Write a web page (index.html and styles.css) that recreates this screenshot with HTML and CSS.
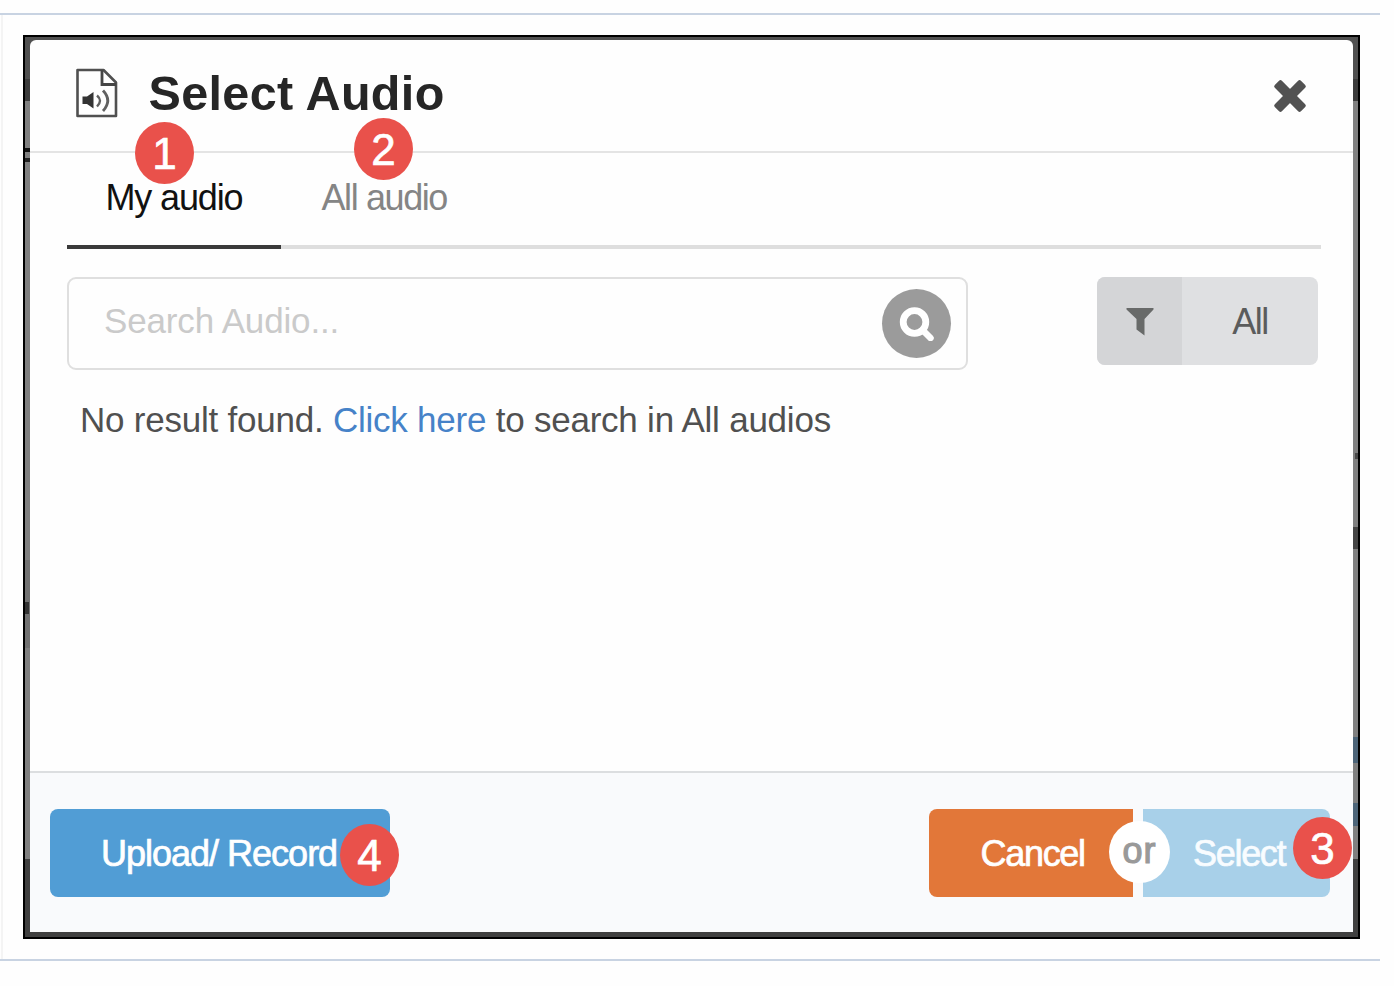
FILE: index.html
```html
<!DOCTYPE html>
<html lang="en">
<head>
<meta charset="utf-8">
<title>Select Audio</title>
<link rel="stylesheet" href="styles.css">
</head>
<body>
<div class="cell">
  <div class="frame">
    <div class="modal">
      <header class="modal-head">
        <svg class="file-icon" width="44" height="51" viewBox="0 0 44 51" fill="none">
          <path d="M2.500 2H28.500L41 14.500V48H2.500Z" stroke="#505050" stroke-width="2.600" stroke-linejoin="round"/>
          <path d="M27 2V16.500H41" stroke="#454545" stroke-width="2.800"/>
          <path d="M7.500 28.500H12L18.500 24V40.500L12 36H7.500Z" fill="#333"/>
          <path d="M22 27.500Q28 32.500 22 38.500" stroke="#606060" stroke-width="2.400"/>
          <path d="M28 22.500Q37.500 32.500 28 43" stroke="#606060" stroke-width="2.800"/>
        </svg>
        <h1 class="title">Select Audio</h1>
        <svg class="close-icon" width="34" height="34" viewBox="0 0 34 34" fill="#525252">
          <rect x="-1.500" y="12" width="37" height="10" rx="2" transform="rotate(45 17 17)"/>
          <rect x="-1.500" y="12" width="37" height="10" rx="2" transform="rotate(-45 17 17)"/>
        </svg>
      </header>
      <main class="modal-body">
        <nav class="tabs">
          <a class="tab tab-active">My audio<span class="badge badge-one">1</span></a>
          <a class="tab tab-all">All audio<span class="badge badge-two">2</span></a>
        </nav>
        <div class="search-row">
          <div class="search-box">
            <span class="placeholder">Search Audio...</span>
            <span class="search-button">
              <svg width="36" height="34" viewBox="0 0 36 34" fill="none">
                <circle cx="15.500" cy="15" r="11.300" stroke="#fff" stroke-width="6.800"/>
                <path d="M23.500 23L31.500 31" stroke="#fff" stroke-width="6.500" stroke-linecap="round"/>
              </svg>
            </span>
          </div>
          <div class="filter">
            <span class="filter-icon">
              <svg width="28" height="29" viewBox="0 0 28 29"><path d="M.5 1H27.500V2.500L18.500 12V28.500L10.500 22.500V12L.5 2.500Z" fill="#686a69"/></svg>
            </span>
            <span class="filter-label">All</span>
          </div>
        </div>
        <p class="result">No result found. <a class="link">Click here</a> to search in All audios</p>
      </main>
      <footer class="modal-foot">
        <div class="button upload">Upload/ Record<span class="badge badge-four">4</span></div>
        <div class="choices">
          <div class="button cancel">Cancel</div>
          <div class="button select">Select<span class="badge badge-three">3</span></div>
          <span class="or">or</span>
        </div>
      </footer>
    </div>
  </div>
</div>
</body>
</html>
```
FILE: styles.css
```css
* { box-sizing: border-box; }
body {
  margin: 0;
  padding-top: 13px;
  background: #fefefe;
  font-family: "Liberation Sans", Arial, sans-serif;
}
.cell {
  width: 1380px;
  height: 948px;
  border-top: 2px solid #c8d3e2;
  border-bottom: 2px solid #c8d3e2;
  padding: 20px 20px 20px 23px;
  background: linear-gradient(#f4f4f4, #f4f4f4) 1px 0 / 2px 100% no-repeat;
}
.frame {
  width: 1337px;
  height: 904px;
  border: 2px solid #000;
  padding: 3px 5px 5.5px 5px;
  background:
    linear-gradient(#111, #111) 0 111px / 5px 4px no-repeat,
    linear-gradient(#222, #222) 0 121px / 5px 4px no-repeat,
    linear-gradient(#333, #333) 0 565px / 4px 12px no-repeat,
    linear-gradient(#727272, #727272) 0 523px / 6px 88px no-repeat,
    linear-gradient(#454545, #454545) 100% 490px / 5px 22px no-repeat,
    linear-gradient(#4a4a4a, #4a4a4a) 100% 416px / 3px 6px no-repeat,
    linear-gradient(#4d6579, #4d6579) 100% 700px / 6px 26px no-repeat,
    linear-gradient(#4d6579, #4d6579) 100% 766px / 6px 23px no-repeat,
    linear-gradient(#505050 0 42px, #3c3c3c 42px 64px, #808080 64px 822px, #404040 822px);
}
.modal {
  height: 891.500px;
  display: flex;
  flex-direction: column;
  background: #fefefe;
  border-radius: 6px 6px 0 0;
}
.modal-head {
  height: 113px;
  flex: none;
  display: flex;
  align-items: flex-start;
  border-bottom: 2px solid #e4e4e4;
  padding: 28px 46px 0 44.500px;
}
.title {
  margin: -4px 0 0 30px;
  font-size: 48.500px;
  line-height: 58px;
  letter-spacing: .35px;
  color: #262626;
  white-space: nowrap;
}
.close-icon { margin: 10.500px 0 0 auto; }
.modal-body { flex: 1; padding: 0 32px 0 37px; }
.tabs {
  height: 96px;
  display: flex;
  border-bottom: 4px solid #dedede;
}
.tab {
  position: relative;
  height: 96px;
  padding-top: 25px;
  font-size: 36px;
  line-height: 40px;
  letter-spacing: -1.15px;
  white-space: nowrap;
}
.tab-active {
  width: 214px;
  padding-left: 38.500px;
  border-bottom: 4px solid #3a3a3a;
  color: #111;
}
.tab-all {
  padding-left: 40.500px;
  letter-spacing: -1.4px;
  color: #858585;
}
.badge {
  position: absolute;
  width: 59px;
  height: 62px;
  border-radius: 50%;
  background: #e9514b;
  color: #fff;
  font-size: 44px;
  line-height: 63px;
  letter-spacing: 0;
  text-align: center;
  -webkit-text-stroke: .7px #fff;
}
.badge-one { left: 68px; top: -31px; }
.badge-two { left: 73px; top: -35px; }
.badge-three { left: 150px; top: 8px; }
.badge-four { left: 290px; top: 15px; }
.search-row {
  display: flex;
  justify-content: space-between;
  margin-top: 28px;
  padding-right: 3px;
}
.search-box {
  width: 901px;
  height: 93px;
  display: flex;
  align-items: center;
  justify-content: space-between;
  border: 2px solid #dfdfdf;
  border-radius: 9px;
  padding: 0 15px 0 35px;
}
.placeholder {
  font-size: 35px;
  line-height: 40px;
  letter-spacing: -.15px;
  padding-bottom: 5px;
  color: #cacaca;
}
.search-button {
  width: 69px;
  height: 69px;
  display: flex;
  align-items: center;
  justify-content: center;
  border-radius: 50%;
  background: #9b9b9b;
}
.filter {
  width: 221px;
  height: 88px;
  display: flex;
  border-radius: 8px;
  overflow: hidden;
  background: #dfe0e2;
}
.filter-icon {
  width: 85px;
  display: flex;
  align-items: center;
  justify-content: center;
  background: #d4d5d7;
}
.filter-label {
  flex: 1;
  text-align: center;
  font-size: 36px;
  line-height: 89px;
  letter-spacing: -1.500px;
  color: #5b5c5c;
}
.result {
  margin: 30px 0 0 13px;
  font-size: 35px;
  line-height: 40px;
  letter-spacing: -.23px;
  color: #505050;
  white-space: nowrap;
}
.link { color: #4682c8; }
.modal-foot {
  height: 160.500px;
  flex: none;
  display: flex;
  justify-content: space-between;
  align-items: flex-start;
  border-top: 2px solid #dcdee0;
  background: #f9fafc;
  padding: 36px 23px 0 20px;
}
.button {
  position: relative;
  height: 88px;
  font-size: 36px;
  line-height: 89px;
  letter-spacing: -1.300px;
  color: #fff;
  white-space: nowrap;
  -webkit-text-stroke: .7px currentColor;
}
.upload {
  width: 340px;
  padding-left: 51px;
  border-radius: 8px;
  letter-spacing: -1px;
  background: #519dd5;
}
.choices { position: relative; display: flex; gap: 10px; }
.cancel {
  width: 204px;
  padding-left: 51.500px;
  border-radius: 8px 0 0 8px;
  background: #e27739;
}
.select {
  width: 187px;
  padding-left: 50px;
  border-radius: 0 8px 8px 0;
  background: #a8d0e9;
  color: #f8fcff;
}
.or {
  position: absolute;
  left: 180px;
  top: 12px;
  width: 61px;
  height: 62px;
  border-radius: 50%;
  background: #fff;
  color: #999;
  font-size: 36px;
  letter-spacing: 1px;
  line-height: 60px;
  text-align: center;
  -webkit-text-stroke: 1.200px #999;
}
```
